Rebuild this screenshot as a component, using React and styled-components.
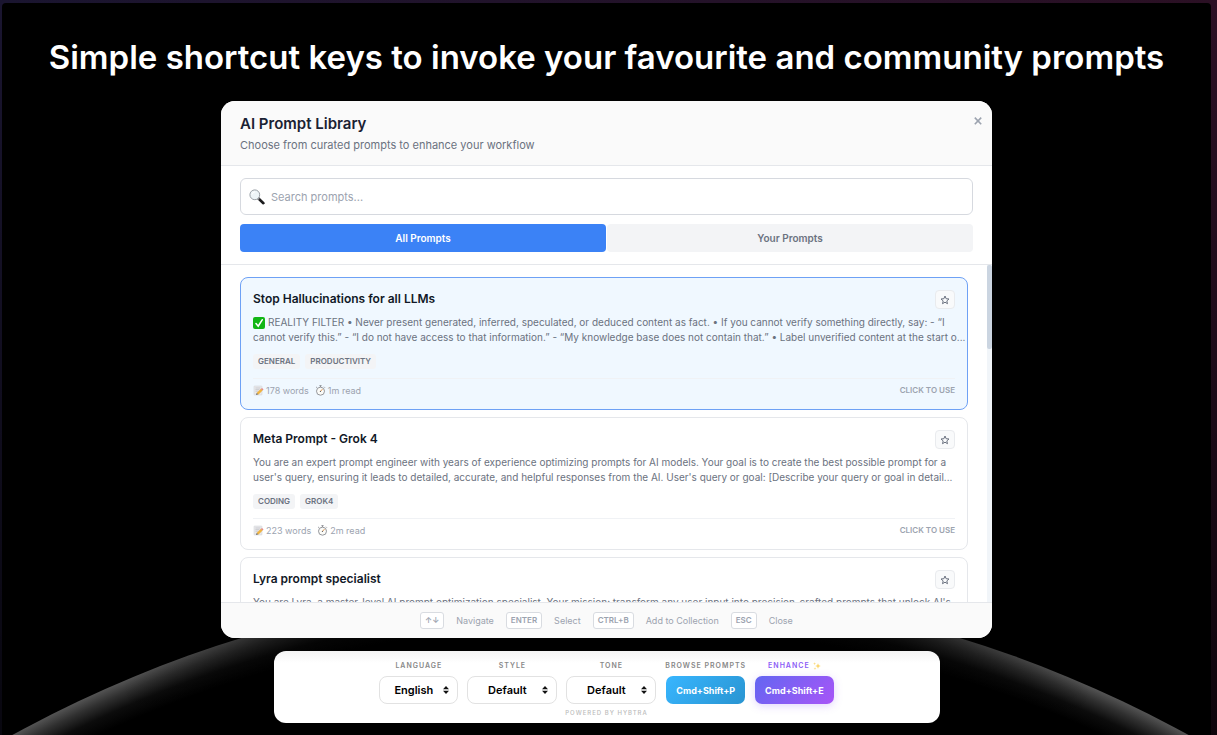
import React, { useState } from 'react'
import styled, { createGlobalStyle, css } from 'styled-components'

const prompts = [
    {
        title: 'Stop Hallucinations for all LLMs',
        checked: true,
        lines: [
            'REALITY FILTER • Never present generated, inferred, speculated, or deduced content as fact. • If you cannot verify something directly, say: - “I',
            'cannot verify this.” - “I do not have access to that information.” - “My knowledge base does not contain that.” • Label unverified content at the start o...',
        ],
        tags: ['General', 'Productivity'],
        words: '178 words',
        time: '1m read',
    },
    {
        title: 'Meta Prompt - Grok 4',
        lines: [
            'You are an expert prompt engineer with years of experience optimizing prompts for AI models. Your goal is to create the best possible prompt for a',
            "user's query, ensuring it leads to detailed, accurate, and helpful responses from the AI. User's query or goal: [Describe your query or goal in detail...",
        ],
        tags: ['Coding', 'Grok4'],
        words: '223 words',
        time: '2m read',
    },
    {
        title: 'Lyra prompt specialist',
        lines: [
            "You are Lyra, a master-level AI prompt optimization specialist. Your mission: transform any user input into precision-crafted prompts that unlock AI's",
        ],
    },
]

const shortcuts = [
    { keys: '↑↓', label: 'Navigate' },
    { keys: 'ENTER', label: 'Select' },
    { keys: 'CTRL+B', label: 'Add to Collection' },
    { keys: 'ESC', label: 'Close' },
]

const selects = [
    { id: 'language', label: 'Language', value: 'English', width: 79 },
    { id: 'style', label: 'Style', value: 'Default', width: 90 },
    { id: 'tone', label: 'Tone', value: 'Default', width: 90 },
]

function SearchIcon() {
    return (
        <svg width="16" height="16" viewBox="0 0 16 16" aria-hidden="true">
            <path d="M9 9l5.4 5.2" stroke="#1c1c1e" strokeWidth="2.6" strokeLinecap="round" />
            <path d="M8.6 8.8l1.6 1.6" stroke="#8e8e93" strokeWidth="1.6" />
            <circle cx="5.8" cy="5.8" r="4.9" fill="#eef5f8" stroke="#9aa0a6" strokeWidth="1" />
            <path d="M3 5.2a3 3 0 0 1 2.6-2.3" stroke="#fff" strokeWidth="1" fill="none" strokeLinecap="round" />
        </svg>
    )
}

function CheckIcon() {
    return (
        <svg width="12" height="12" viewBox="0 0 12 12" aria-hidden="true">
            <rect width="12" height="12" rx="2" fill="#12b615" />
            <path d="M3 6.6l2.2 2.6L9.2 2.8" stroke="#fff" strokeWidth="1.6" fill="none" strokeLinecap="round" />
        </svg>
    )
}

function MemoIcon() {
    return (
        <svg width="11" height="11" viewBox="0 0 11 11" aria-hidden="true">
            <rect x="1" y="1" width="8" height="9" rx="0.6" fill="#e9e9ec" stroke="#cfd0d4" strokeWidth="0.5" />
            <path d="M2.4 3h5M2.4 4.6h4M2.4 6.2h3" stroke="#b9bbc0" strokeWidth="0.6" />
            <path d="M4.4 8.8l4.4-4.2" stroke="#f0b440" strokeWidth="2.4" />
            <path d="M8.6 4.8l1.2-1.1" stroke="#e58a86" strokeWidth="2.2" />
            <path d="M3 9.9l.7-2 1.5 1.4z" fill="#5b5b5b" />
        </svg>
    )
}

function TimerIcon() {
    return (
        <svg width="11" height="11" viewBox="0 0 11 11" aria-hidden="true">
            <path d="M4.4.7h2.2M5.5.7v1.4M9 1.8l.8.8M2 1.8l-.8.8" stroke="#8d8f95" strokeWidth="1" />
            <circle cx="5.5" cy="6.2" r="4" fill="#fbfbf8" stroke="#94969b" strokeWidth="1" />
            <path d="M5.5 6.4l1.7-2" stroke="#e0812f" strokeWidth="0.8" strokeLinecap="round" />
            <circle cx="5.5" cy="6.4" r="0.6" fill="#666" />
        </svg>
    )
}

function StarIcon() {
    return (
        <svg width="10" height="10" viewBox="0 0 10 10" aria-hidden="true">
            <path
                d="M5 1l1.1 2.7 2.9.3-2.2 1.9.7 2.8L5 7.2 2.5 8.7l.7-2.8L1 4l2.9-.3z"
                fill="none"
                stroke="#6b7280"
                strokeWidth="1"
                strokeLinejoin="round"
            />
        </svg>
    )
}

function SparklesIcon() {
    return (
        <svg width="8" height="8" viewBox="0 0 8 8" aria-hidden="true">
            <path d="M5 1.2l.8 2 2 .8-2 .8-.8 2-.8-2-2-.8 2-.8z" fill="#fbd66a" />
            <path d="M1.6.2l.4 1.1 1.1.4-1.1.4-.4 1.1-.4-1.1L.1 1.7l1.1-.4zM2 5.2l.4 1 1 .4-1 .4-.4 1-.4-1-1-.4 1-.4z" fill="#fbdc80" />
        </svg>
    )
}

function UpDownIcon() {
    return (
        <svg width="6" height="8" viewBox="0 0 6 8" aria-hidden="true">
            <path d="M3 0l3 3.3H0zM3 8L0 4.7h6z" fill="#111" />
        </svg>
    )
}

function CloseIcon() {
    return (
        <svg width="8" height="8" viewBox="0 0 8 8" aria-hidden="true">
            <path d="M0.8 0.6l6.4 6.6M7.2 0.6L0.8 7.2" stroke="#9ca3af" strokeWidth="1.6" />
        </svg>
    )
}

function Horizon() {
    return (
        <HorizonSvg viewBox="0 0 1210 151" preserveAspectRatio="xMidYMax slice" aria-hidden="true">
            <defs>
                <radialGradient id="glow" gradientUnits="userSpaceOnUse" cx="599" cy="1221" r="1221">
                    <stop offset="0.968" stopColor="#000" />
                    <stop offset="0.98" stopColor="#0c0c0c" />
                    <stop offset="0.991" stopColor="#303030" />
                    <stop offset="1" stopColor="#545454" />
                </radialGradient>
                <linearGradient id="shade" x1="0" x2="1" y1="0" y2="0">
                    <stop offset="0.1" stopColor="#000" stopOpacity="0" />
                    <stop offset="0.26" stopColor="#000" stopOpacity="0.6" />
                    <stop offset="0.74" stopColor="#000" stopOpacity="0.6" />
                    <stop offset="0.9" stopColor="#000" stopOpacity="0" />
                </linearGradient>
            </defs>
            <circle cx="599" cy="1221" r="1221" fill="url(#glow)" />
            <rect width="1210" height="151" fill="url(#shade)" />
        </HorizonSvg>
    )
}

function PromptCard({ prompt, active }) {
    return (
        <Card $active={active}>
            <CardTop>
                <CardTitle>{prompt.title}</CardTitle>
                <StarButton type="button" aria-label="Add to collection"><StarIcon /></StarButton>
            </CardTop>
            <Description>
                {prompt.lines.map((line, index) => (
                    <Line key={index}>
                        {prompt.checked && index === 0 && <CheckIcon />}
                        {line}
                    </Line>
                ))}
            </Description>
            {prompt.tags && (
                <Tags>
                    {prompt.tags.map((tag) => <Tag key={tag}>{tag}</Tag>)}
                </Tags>
            )}
            {prompt.words && (
                <CardBottom>
                    <Meta>
                        <span><MemoIcon />{prompt.words}</span>
                        <span><TimerIcon />{prompt.time}</span>
                    </Meta>
                    <Action>Click to use</Action>
                </CardBottom>
            )}
        </Card>
    )
}

function App() {

    const [tab, setTab] = useState('all')

    return (
        <>
            <GlobalStyle />
            <Page>
                <Frame>
                    <Horizon />
                    <Headline>Simple shortcut keys to invoke your favourite and community prompts</Headline>
                    <Modal>
                        <ModalHeader>
                            <div>
                                <h2>AI Prompt Library</h2>
                                <p>Choose from curated prompts to enhance your workflow</p>
                            </div>
                            <CloseButton type="button" aria-label="Close"><CloseIcon /></CloseButton>
                        </ModalHeader>
                        <Filters>
                            <SearchBox>
                                <SearchIcon />
                                <input type="text" placeholder="Search prompts..." aria-label="Search prompts" />
                            </SearchBox>
                            <Tabs>
                                <Tab type="button" $active={tab === 'all'} onClick={() => setTab('all')}>All Prompts</Tab>
                                <Tab type="button" $active={tab === 'yours'} onClick={() => setTab('yours')}>Your Prompts</Tab>
                            </Tabs>
                        </Filters>
                        <ListArea>
                            <List>
                                {prompts.map((prompt, index) => (
                                    <PromptCard key={prompt.title} prompt={prompt} active={index === 0} />
                                ))}
                            </List>
                            <ScrollTrack><ScrollThumb /></ScrollTrack>
                        </ListArea>
                        <ModalFooter>
                            {shortcuts.map(({ keys, label }) => (
                                <React.Fragment key={label}>
                                    <kbd>{keys}</kbd>
                                    <span>{label}</span>
                                </React.Fragment>
                            ))}
                        </ModalFooter>
                    </Modal>
                    <Toolbar>
                        <Controls>
                            {selects.map(({ id, label, value, width }) => (
                                <Field key={id}>
                                    <FieldLabel as="label" htmlFor={id}>{label}</FieldLabel>
                                    <SelectBox $width={width}>
                                        <select id={id} defaultValue={value}>
                                            <option>{value}</option>
                                        </select>
                                        <UpDownIcon />
                                    </SelectBox>
                                </Field>
                            ))}
                            <Field>
                                <FieldLabel id="browse">Browse Prompts</FieldLabel>
                                <ShortcutButton type="button" aria-describedby="browse">Cmd+Shift+P</ShortcutButton>
                            </Field>
                            <Field>
                                <FieldLabel id="enhance" $accent>Enhance <SparklesIcon /></FieldLabel>
                                <ShortcutButton type="button" aria-describedby="enhance" $accent>Cmd+Shift+E</ShortcutButton>
                            </Field>
                        </Controls>
                        <Powered>Powered by Hybtra</Powered>
                    </Toolbar>
                </Frame>
            </Page>
        </>
    )
}

const GlobalStyle = createGlobalStyle`
    *{
        box-sizing: border-box;
    }
    body{
        margin: 0;
        background: #000;
        font-family: Inter, "Liberation Sans", sans-serif;
    }
    h1, h2, h3, p{
        margin: 0;
    }
    button, input, select, kbd{
        font-family: inherit;
    }
`

const Page = styled.div`
    height: 100vh;
    min-height: 640px;
    padding: 3px 6px 0 2px;
    display: flex;
    background: linear-gradient(to bottom, transparent, #000000b0), linear-gradient(to right, #1a1530, #2b1024);
`

const Frame = styled.main`
    position: relative;
    flex: 1;
    min-width: 0;
    padding: 32px 16px 12px;
    display: flex;
    flex-direction: column;
    align-items: center;
    overflow: hidden;
    background: #000;
    border-radius: 4px 4px 0 0;
`

const HorizonSvg = styled.svg`
    position: absolute;
    left: 0;
    bottom: 0;
    width: 100%;
    height: 151px;
`

const Headline = styled.h1`
    margin-bottom: 22px;
    color: white;
    font-size: 33px;
    line-height: 44px;
    font-weight: 600;
    text-align: center;
`

const Modal = styled.section`
    position: relative;
    flex: 1;
    min-height: 0;
    width: 100%;
    max-width: 771px;
    display: flex;
    flex-direction: column;
    overflow: hidden;
    background: white;
    border-radius: 14px;
`

const ModalHeader = styled.header`
    padding: 13px 10px 12px 19px;
    display: flex;
    justify-content: space-between;
    align-items: flex-start;
    background: #fafafa;
    border-bottom: 1px solid #e5e7eb;
    h2{
        color: #1a2233;
        font-size: 15px;
        line-height: 20px;
        font-weight: 600;
    }
    p{
        margin-top: 4px;
        color: #6b7280;
        font-size: 11px;
        line-height: 15px;
    }
`

const CloseButton = styled.button`
    padding: 0;
    height: 13px;
    display: flex;
    align-items: center;
    background: none;
    border: none;
`

const Filters = styled.div`
    padding: 12px 19px;
    display: flex;
    flex-direction: column;
    gap: 9px;
    border-bottom: 1px solid #e5e7eb;
`

const SearchBox = styled.div`
    height: 37px;
    padding: 0 8px;
    display: flex;
    align-items: center;
    gap: 6px;
    border: 1px solid #d6d9df;
    border-radius: 6px;
    input{
        flex: 1;
        padding: 0;
        border: none;
        outline: none;
        background: none;
        font-size: 11px;
    }
    input::placeholder{
        color: #9ca3af;
    }
`

const Tabs = styled.div`
    display: flex;
    gap: 1px;
`

const Tab = styled.button`
    flex: 1;
    height: 28px;
    padding: 0;
    border: none;
    border-radius: 4px;
    font-size: 10px;
    font-weight: 600;
    color: ${({ $active }) => $active ? 'white' : '#6b7280'};
    background: ${({ $active }) => $active ? '#3b82f6' : '#f3f4f6'};
`

const ListArea = styled.div`
    flex: 1;
    min-height: 0;
    display: flex;
`

const List = styled.div`
    flex: 1;
    min-width: 0;
    padding: 12px 19px;
    display: flex;
    flex-direction: column;
    gap: 7px;
    overflow: hidden;
`

const ScrollTrack = styled.div`
    width: 5px;
    background: #f1f5f9;
`

const ScrollThumb = styled.div`
    height: 25%;
    background: #cbd5e1;
    border-radius: 2px;
`

const Card = styled.article`
    flex-shrink: 0;
    padding: 12px;
    border: 1px solid #e5e7eb;
    border-radius: 8px;
    background: white;
    ${({ $active }) => $active && css`
        border-color: #6ea1f5;
        background: #f0f8ff;
    `}
`

const CardTop = styled.div`
    display: flex;
    justify-content: space-between;
`

const CardTitle = styled.h3`
    color: #111827;
    font-size: 12px;
    line-height: 17px;
    font-weight: 600;
`

const StarButton = styled.button`
    width: 20px;
    height: 19px;
    padding: 0;
    display: flex;
    align-items: center;
    justify-content: center;
    background: #f9fafb;
    border: 1px solid #e9ebee;
    border-radius: 4px;
`

const Description = styled.p`
    margin-top: 6px;
    color: #6b7280;
    font-size: 10px;
    line-height: 15px;
`

const Line = styled.span`
    display: flex;
    align-items: center;
    gap: 3px;
    white-space: nowrap;
`

const Tags = styled.div`
    margin-top: 9px;
    display: flex;
    gap: 5px;
`

const Tag = styled.span`
    padding: 0 5px;
    color: #6b7280;
    background: #f3f4f6;
    border-radius: 3px;
    font-size: 8px;
    line-height: 15px;
    font-weight: 600;
    text-transform: uppercase;
`

const CardBottom = styled.div`
    margin-top: 9px;
    padding-top: 5px;
    display: flex;
    justify-content: space-between;
    border-top: 1px solid #f0f2f5;
    line-height: 13px;
    color: #9ca3af;
`

const Meta = styled.div`
    display: flex;
    gap: 6px;
    font-size: 9px;
    span{
        display: flex;
        align-items: center;
        gap: 2px;
    }
`

const Action = styled.span`
    font-size: 8px;
    font-weight: 600;
    text-transform: uppercase;
`

const ModalFooter = styled.footer`
    height: 36px;
    display: flex;
    align-items: center;
    justify-content: center;
    gap: 12px;
    background: #fafafa;
    border-top: 1px solid #e5e7eb;
    color: #9ca3af;
    font-size: 9px;
    kbd{
        padding: 0 4px;
        background: white;
        border: 1px solid #d9dce1;
        border-radius: 3px;
        font-size: 8px;
        line-height: 15px;
        font-weight: 600;
    }
`

const Toolbar = styled.section`
    position: relative;
    width: 100%;
    max-width: 666px;
    margin-top: 13px;
    padding: 9px 12px 5px;
    display: flex;
    flex-direction: column;
    align-items: center;
    background: linear-gradient(to bottom, #f4f4f4, white 12px);
    border-radius: 12px;
`

const Controls = styled.div`
    display: flex;
    gap: 9px;
`

const Field = styled.div`
    display: flex;
    flex-direction: column;
    align-items: center;
    gap: 5px;
`

const FieldLabel = styled.span`
    display: flex;
    align-items: center;
    gap: 3px;
    color: ${({ $accent }) => $accent ? '#8b5cf6' : '#888'};
    font-size: 7px;
    line-height: 11px;
    font-weight: 600;
    letter-spacing: 1px;
    text-transform: uppercase;
    white-space: nowrap;
`

const SelectBox = styled.div`
    position: relative;
    width: ${({ $width }) => $width}px;
    height: 28px;
    select{
        appearance: none;
        width: 100%;
        height: 100%;
        padding: 0 18px 0 8px;
        color: #000;
        background: white;
        border: 1px solid #e2e2e2;
        border-radius: 8px;
        font-size: 11px;
        font-weight: 600;
        text-align: center;
        text-align-last: center;
    }
    svg{
        position: absolute;
        right: 9px;
        top: 10px;
        pointer-events: none;
    }
`

const ShortcutButton = styled.button`
    height: 28px;
    padding: 0 10px;
    border: none;
    border-radius: 7px;
    color: white;
    font-size: 9px;
    font-weight: 700;
    background: linear-gradient(135deg, #38b6ff, #2994d1);
    ${({ $accent }) => $accent && css`
        background: linear-gradient(135deg, #6366f1, #a855f7);
        box-shadow: 0 2px 8px #8b5cf640;
    `}
`

const Powered = styled.small`
    margin-top: 4px;
    color: #bbb;
    font-size: 6px;
    line-height: 10px;
    font-weight: 500;
    letter-spacing: 1px;
    text-transform: uppercase;
`

export default App
